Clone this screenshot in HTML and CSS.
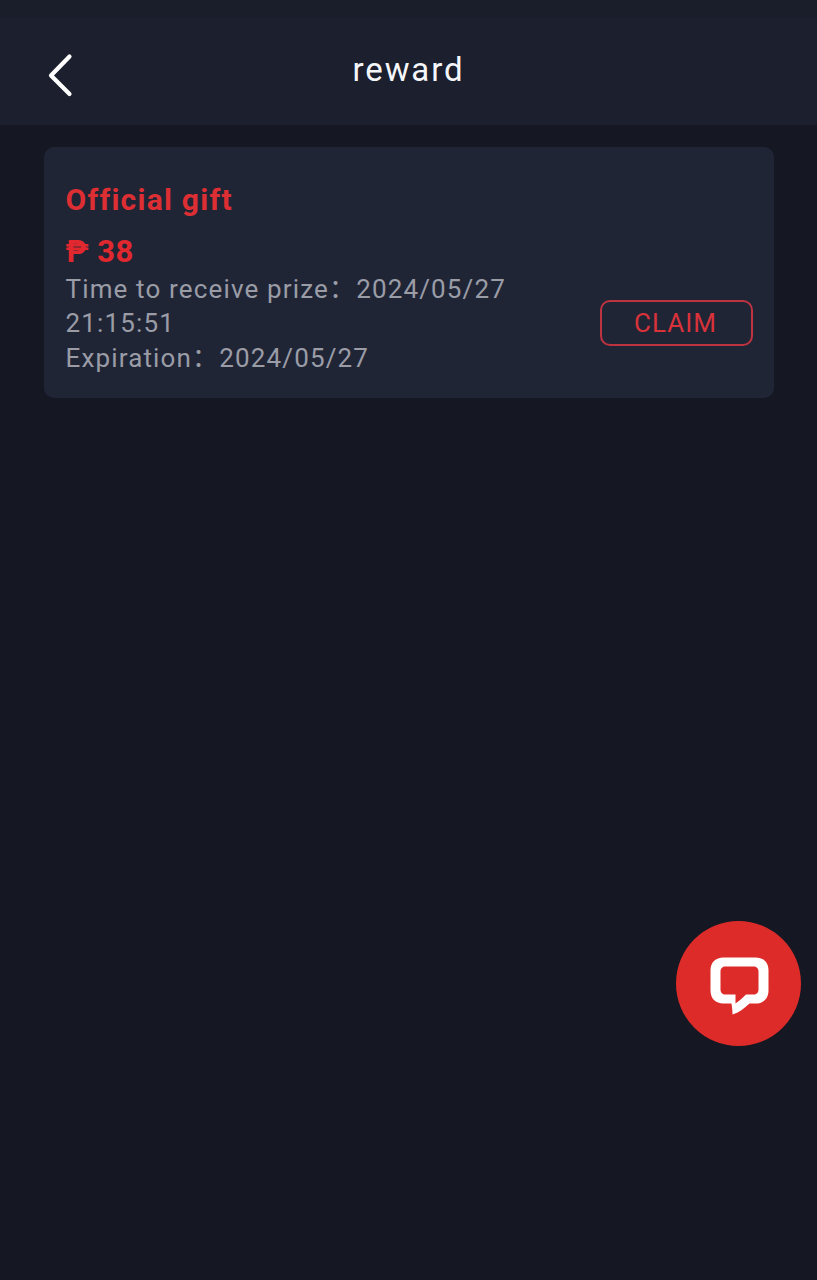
FILE: index.html
```html
<!DOCTYPE html>
<html lang="en">
<head>
<meta charset="utf-8">
<title>reward</title>
<link rel="stylesheet" href="styles.css">
</head>
<body>
<div class="page">
  <div class="status"></div>
  <header class="nav">
    <svg class="back" width="26" height="44" viewBox="0 0 26 44"><path d="M22.500 3.500 L4 22.500 L22.500 41" fill="none" stroke="#fff" stroke-width="4.200" stroke-linecap="round" stroke-linejoin="round"/></svg>
    <h1 class="title">reward</h1>
  </header>
  <main class="list">
    <section class="card">
      <div class="info">
        <div class="name">Official gift</div>
        <div class="amount">₱ 38</div>
        <div class="line">Time to receive prize：2024/05/27 21:15:51</div>
        <div class="line">Expiration：2024/05/27</div>
      </div>
      <button class="claim">CLAIM</button>
    </section>
  </main>
  <div class="chat">
    <svg width="64" height="64" viewBox="0 0 64 64"><path fill-rule="evenodd" fill="#fff" d="M16.500 5.500H48.500C56.500 5.500 61.500 10.500 61.500 18.500V38.500C61.500 46.500 56.500 51.500 48.500 51.500H42.500C37 56.500 32 60.500 25.500 62.500C25.500 58.500 25 55 24.500 51.500H16.500C8.500 51.500 3.500 46.500 3.500 38.500V18.500C3.500 10.500 8.500 5.500 16.500 5.500Z M18.500 14.500C15.500 14.500 13.500 16.500 13.500 19.500V37.500C13.500 40.500 15.500 42.500 18.500 42.500H28.500V51.500C32 49 35.500 46 39 42.500H46.500C49.500 42.500 51.500 40.500 51.500 37.500V19.500C51.500 16.500 49.500 14.500 46.500 14.500Z"/></svg>
  </div>
</div>
</body>
</html>
```
FILE: styles.css
```css
* { box-sizing: border-box; }
html, body { margin: 0; height: 100%; }
body { background: #151823; font-family: Roboto, "Noto Sans CJK SC", sans-serif; }
.page { position: relative; height: 1280px; overflow: hidden; }
.status { height: 17px; background: #1a1e2b; }
.nav { height: 108px; background: #1c1f2e; display: flex; align-items: center; justify-content: center; position: relative; }
.back { position: absolute; left: 47px; top: 36px; }
.title { margin: 0 0 3px; font-size: 33px; font-weight: 400; color: #f5f6fa; letter-spacing: 1.9px; line-height: 40px; }
.list { padding: 22px 43px 0 44px; }
.card { background: #202536; border-radius: 10px; height: 251px; padding: 0 21px 0 22px; display: flex; align-items: flex-end; justify-content: space-between; }
.info { width: 460px; padding-bottom: 23px; }
.name { font-size: 30px; font-weight: 700; color: #dd2f33; letter-spacing: 1.25px; line-height: 34px; margin: 0 0 18px -0.500px; }
.amount { font-size: 31px; font-weight: 700; color: #e0282e; line-height: 34px; letter-spacing: 0.5px; margin: 0 0 3px -0.500px; }
.line { font-size: 26px; color: #9a9ca6; letter-spacing: 1.15px; line-height: 34.500px; margin-left: -0.500px; }
.claim { width: 153px; height: 46px; margin-bottom: 52px; background: transparent; border: 2px solid #bd3340; border-radius: 10px; color: #d8323a; font: 400 26px Roboto, sans-serif; letter-spacing: 1px; padding: 0 2px 0 0; }
.chat { position: absolute; left: 676px; top: 921px; width: 125px; height: 125px; border-radius: 50%; background: #dd2b29; display: flex; align-items: center; justify-content: center; }
```
